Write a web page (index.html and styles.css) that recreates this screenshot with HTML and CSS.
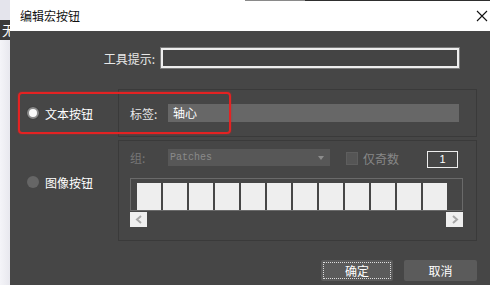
FILE: index.html
```html
<!DOCTYPE html>
<html lang="zh-CN">
<head>
    <meta charset="UTF-8">
    <meta name="viewport" content="width=device-width, initial-scale=1.0">
    <title>编辑宏按钮</title>
    <link rel="stylesheet" href="styles.css">
</head>
<body>

    <div class="screen">
        <div class="backdrop">
            <div class="bd-top"></div>
            <div class="bd-bar"><span>无</span></div>
            <div class="bd-rest"></div>
        </div>

        <div class="dialog">
            <div class="titlebar">
                <span class="title">编辑宏按钮</span>
                <svg class="close" width="12" height="12" viewBox="0 0 12 12">
                    <path d="M1 1 L11 11 M11 1 L1 11" stroke="#111" stroke-width="1.1" fill="none"/>
                </svg>
            </div>

            <div class="dialog-body">
                <div class="tip-row">
                    <span class="tip-label">工具提示:</span>
                    <div class="tip-field"></div>
                </div>

                <div class="mode-area">
                    <div class="mode-list">
                        <div class="mode-row first">
                            <span class="radio checked"></span>
                            <span>文本按钮</span>
                        </div>
                        <div class="mode-row second">
                            <span class="radio"></span>
                            <span>图像按钮</span>
                        </div>
                    </div>

                    <div class="groups">
                        <div class="group text-group">
                            <span class="field-label">标签:</span>
                            <div class="label-field">轴心</div>
                        </div>

                        <div class="group image-group">
                            <div class="image-row">
                                <span class="field-label dim">组:</span>
                                <div class="dropdown">
                                    <span>Patches</span>
                                    <span class="arrow"></span>
                                </div>
                                <span class="checkbox"></span>
                                <span class="check-label">仅奇数</span>
                                <div class="count">1</div>
                            </div>

                            <div class="strip">
                                <span class="cell"></span><span class="cell"></span><span class="cell"></span>
                                <span class="cell"></span><span class="cell"></span><span class="cell"></span>
                                <span class="cell"></span><span class="cell"></span><span class="cell"></span>
                                <span class="cell"></span><span class="cell"></span><span class="cell"></span>
                            </div>
                            <div class="scroll">
                                <span class="scroll-btn">
                                    <svg width="8" height="9" viewBox="0 0 8 9"><path d="M6 1 L2 4.5 L6 8" stroke="#a8a8a8" stroke-width="2" fill="none"/></svg>
                                </span>
                                <span class="scroll-btn">
                                    <svg width="8" height="9" viewBox="0 0 8 9"><path d="M2 1 L6 4.5 L2 8" stroke="#a8a8a8" stroke-width="2" fill="none"/></svg>
                                </span>
                            </div>
                        </div>
                    </div>
                </div>

                <div class="actions">
                    <button class="btn default">确定</button>
                    <button class="btn">取消</button>
                </div>
            </div>
        </div>

        <div class="highlight"></div>
    </div>

</body>
</html>
```

FILE: styles.css
```css
body {
    margin: 0;
    font-family: "Noto Sans CJK SC", "Liberation Sans", sans-serif;
    font-size: 12px;
}

.screen {
    position: relative;
    display: flex;
    width: 490px;
    height: 285px;
    overflow: hidden;
}

/* window behind the dialog */
.backdrop {
    width: 10px;
    display: flex;
    flex-direction: column;
    overflow: hidden;
}

.bd-top {
    height: 20px;
    background: #e4e4ec;
}

.bd-bar {
    height: 20px;
    background: #3a3a3a;
    color: #fff;
    font-size: 13px;
    line-height: 20px;
    padding-left: 2px;
    white-space: nowrap;
}

.bd-rest {
    flex: 1;
    background: linear-gradient(to right, #f4f4f8, #e8e8ee);
}

.dialog {
    flex: 1;
    display: flex;
    flex-direction: column;
}

.titlebar {
    height: 31px;
    display: flex;
    align-items: center;
    justify-content: space-between;
    padding: 0 2px 0 10px;
    background: linear-gradient(to right, #fff 235px, #8a8a8a 235px 295px, #2e2e2e 295px) top / 100% 1px no-repeat, #fff;
    color: #111;
    font-size: 12px;
}

.dialog-body {
    flex: 1;
    background: #464646;
    padding-top: 17px;
    color: #e8e8e8;
}

.tip-row {
    display: flex;
    align-items: center;
    height: 20px;
}

.tip-label {
    width: 145px;
    text-align: right;
    margin-right: 6px;
}

.tip-field {
    width: 298px;
    height: 20px;
    box-sizing: border-box;
    border: 2px solid #eee;
    box-shadow: 0 0 0 1px #7a7a7a;
    background: #444;
}

.mode-area {
    display: flex;
    margin-top: 21px;
}

.mode-list {
    width: 108px;
    padding-left: 17px;
    box-sizing: border-box;
}

.mode-row {
    display: flex;
    align-items: center;
    gap: 6px;
    color: #fff;
    font-size: 12px;
}

.mode-row.first {
    height: 48px;
}

.mode-row.second {
    height: 16px;
    margin-top: 37px;
}

.radio {
    width: 12px;
    height: 12px;
    border-radius: 50%;
    background: #666;
}

.radio.checked {
    box-sizing: border-box;
    background: #fafafa;
    border: 2px solid #8a8a8a;
    box-shadow: 0 0 1px #222;
}

.groups {
    width: 359px;
    display: flex;
    flex-direction: column;
    gap: 3px;
}

.group {
    border: 1px solid #3a3a3a;
    box-sizing: border-box;
    padding-left: 11px;
}

.text-group {
    height: 48px;
    display: flex;
    align-items: center;
}

.field-label {
    width: 38px;
    color: #e8e8e8;
}

.field-label.dim {
    color: #777;
}

.label-field {
    width: 291px;
    height: 18px;
    background: #676767;
    color: #fff;
    line-height: 18px;
    padding-left: 5px;
    box-sizing: border-box;
}

.image-group {
    height: 101px;
    padding-top: 8px;
}

.image-row {
    display: flex;
    align-items: flex-start;
    height: 19px;
}

.image-row .field-label {
    line-height: 17px;
}

.dropdown {
    width: 162px;
    height: 17px;
    background: #575757;
    display: flex;
    align-items: center;
    justify-content: space-between;
    padding: 0 6px 0 2px;
    box-sizing: border-box;
    font-family: "Liberation Mono", monospace;
    font-size: 10px;
    color: #8a8a8a;
}

.arrow {
    width: 0;
    height: 0;
    border-left: 3px solid transparent;
    border-right: 3px solid transparent;
    border-top: 4px solid #8c8c8c;
}

.checkbox {
    width: 12px;
    height: 13px;
    margin: 3px 0 0 16px;
    background: #555;
    border: 1px solid #5e5e5e;
    box-sizing: border-box;
}

.check-label {
    margin-left: 5px;
    color: #888;
    line-height: 19px;
}

.count {
    width: 31px;
    height: 17px;
    margin: 2px 0 0 28px;
    border: 1px solid #eee;
    box-sizing: border-box;
    text-align: center;
    font-family: "Liberation Sans", sans-serif;
    font-size: 11px;
    line-height: 15px;
    color: #fff;
}

.strip {
    width: 333px;
    height: 33px;
    margin-top: 10px;
    box-sizing: border-box;
    border: 1px solid #6a6a6a;
    padding: 4px 0 0 6px;
    display: flex;
    gap: 2px;
}

.cell {
    width: 24px;
    height: 27px;
    background: #eee;
}

.scroll {
    width: 333px;
    display: flex;
    justify-content: space-between;
    margin-top: 1px;
}

.scroll-btn {
    width: 17px;
    height: 15px;
    background: #efefef;
    display: flex;
    align-items: center;
    justify-content: center;
}

.actions {
    display: flex;
    justify-content: flex-end;
    gap: 11px;
    margin-top: 19px;
    padding-right: 13px;
}

.btn {
    width: 72px;
    height: 21px;
    border: none;
    border-radius: 2px;
    background: #5b5b5b;
    color: #fff;
    font-family: "Noto Sans CJK SC", sans-serif;
    font-size: 12px;
    padding: 0;
}

.btn + .btn {
    width: 73px;
}

.btn.default {
    outline: 1px dotted #ddd;
    outline-offset: -3px;
}

/* red annotation box drawn over the dialog */
.highlight {
    position: absolute;
    left: 18px;
    top: 92px;
    width: 213px;
    height: 42px;
    box-sizing: border-box;
    border: 2px solid #e42222;
    border-radius: 4px;
    box-shadow: 0 0 2px rgba(230, 30, 30, 0.6);
}
```
